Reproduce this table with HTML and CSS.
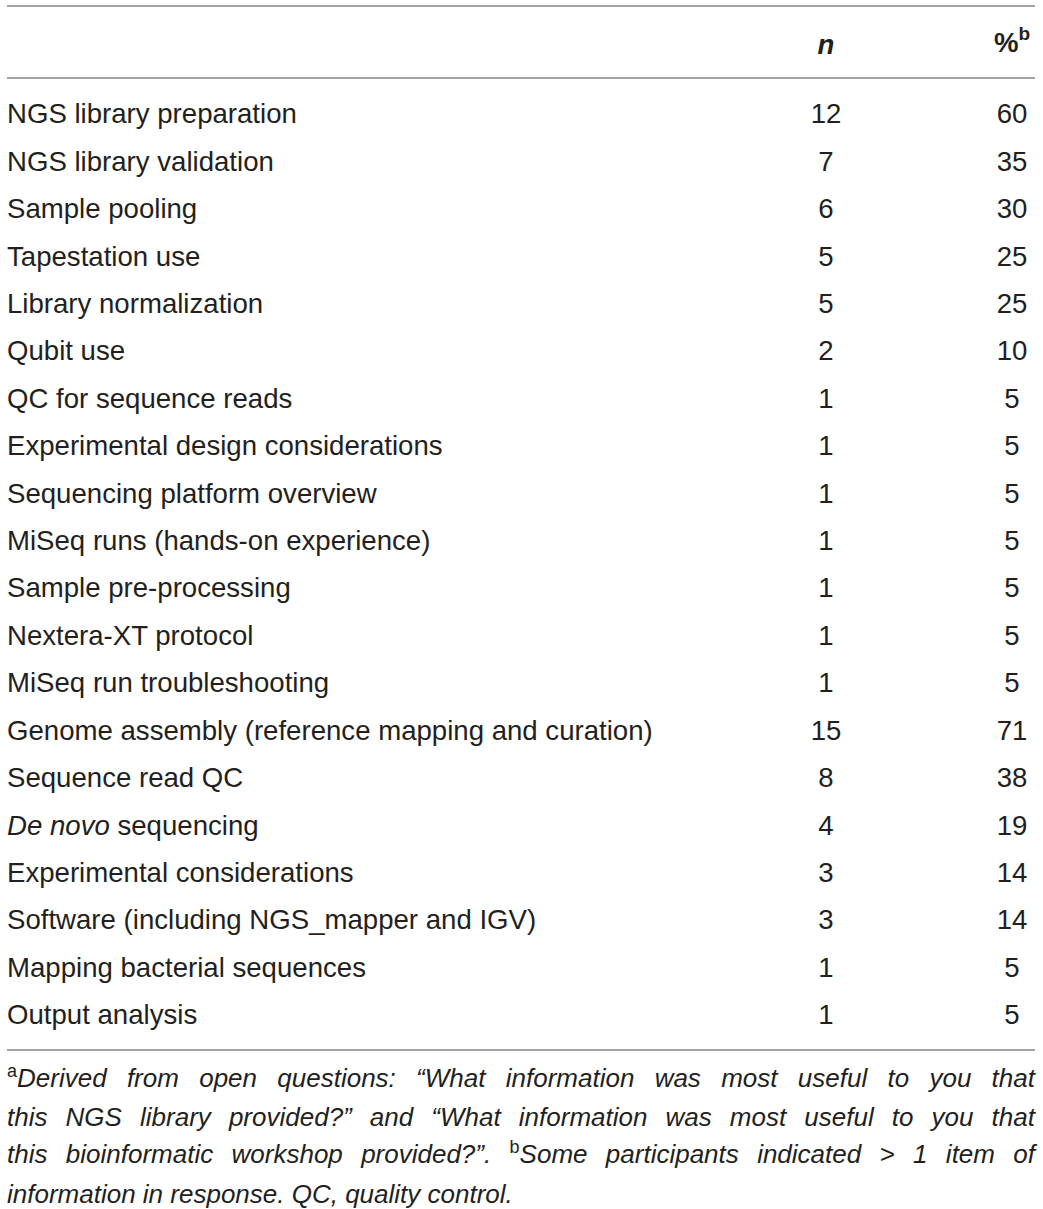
FILE: index.html
```html
<!DOCTYPE html>
<html lang="en">
<head>
<meta charset="utf-8">
<title>Table</title>
<link rel="stylesheet" href="styles.css">
</head>
<body>
<div class="page">
  <table class="data">
    <colgroup>
      <col class="c-label">
      <col class="c-n">
      <col class="c-pct">
    </colgroup>
    <thead>
      <tr>
        <th></th>
        <th class="num"><em>n</em></th>
        <th class="num">%<sup class="hsup">b</sup></th>
      </tr>
    </thead>
    <tbody>
      <tr><td>NGS library preparation</td><td class="num">12</td><td class="num">60</td></tr>
      <tr><td>NGS library validation</td><td class="num">7</td><td class="num">35</td></tr>
      <tr><td>Sample pooling</td><td class="num">6</td><td class="num">30</td></tr>
      <tr><td>Tapestation use</td><td class="num">5</td><td class="num">25</td></tr>
      <tr><td>Library normalization</td><td class="num">5</td><td class="num">25</td></tr>
      <tr><td>Qubit use</td><td class="num">2</td><td class="num">10</td></tr>
      <tr><td>QC for sequence reads</td><td class="num">1</td><td class="num">5</td></tr>
      <tr><td>Experimental design considerations</td><td class="num">1</td><td class="num">5</td></tr>
      <tr><td>Sequencing platform overview</td><td class="num">1</td><td class="num">5</td></tr>
      <tr><td>MiSeq runs (hands-on experience)</td><td class="num">1</td><td class="num">5</td></tr>
      <tr><td>Sample pre-processing</td><td class="num">1</td><td class="num">5</td></tr>
      <tr><td>Nextera-XT protocol</td><td class="num">1</td><td class="num">5</td></tr>
      <tr><td>MiSeq run troubleshooting</td><td class="num">1</td><td class="num">5</td></tr>
      <tr><td>Genome assembly (reference mapping and curation)</td><td class="num">15</td><td class="num">71</td></tr>
      <tr><td>Sequence read QC</td><td class="num">8</td><td class="num">38</td></tr>
      <tr><td><em>De novo</em> sequencing</td><td class="num">4</td><td class="num">19</td></tr>
      <tr><td>Experimental considerations</td><td class="num">3</td><td class="num">14</td></tr>
      <tr><td>Software (including NGS_mapper and IGV)</td><td class="num">3</td><td class="num">14</td></tr>
      <tr><td>Mapping bacterial sequences</td><td class="num">1</td><td class="num">5</td></tr>
      <tr><td>Output analysis</td><td class="num">1</td><td class="num">5</td></tr>
    </tbody>
  </table>
  <div class="notes">
    <span class="line"><sup class="fsup">a</sup>Derived from open questions: “What information was most useful to you that</span>
    <span class="line">this NGS library provided?” and “What information was most useful to you that</span>
    <span class="line">this bioinformatic workshop provided?”. <sup class="fsup">b</sup>Some participants indicated &gt; 1 item of</span>
    <span class="line last">information in response. QC, quality control.</span>
  </div>
</div>
</body>
</html>
```

FILE: styles.css
```css
html, body {
  margin: 0;
  padding: 0;
  background: #ffffff;
}

body {
  font-family: "Liberation Sans", Arial, Helvetica, sans-serif;
  color: #231f20;
}

.page {
  padding: 5px 8px 0 7px;
  width: 1028px;
}

.data {
  width: 1028px;
  border-collapse: collapse;
  table-layout: fixed;
  font-size: 27.6px;
}

.c-label { width: 656px; }
.c-n { width: 326px; }
.c-pct { width: 46px; }

.data th,
.data td {
  padding: 0;
  line-height: 47.4px;
  text-align: left;
  white-space: nowrap;
  font-weight: normal;
}

.data thead tr {
  border-top: 2px solid #a3a3a3;
  border-bottom: 2px solid #a3a3a3;
}

.data thead th {
  padding-top: 12px;
  padding-bottom: 8px;
  font-weight: bold;
}

.data .num {
  text-align: center;
  overflow: visible;
}

.data tbody tr:first-child td {
  padding-top: 11px;
}

.data tbody tr:last-child td {
  padding-bottom: 10px;
}

.data tbody {
  border-bottom: 2px solid #a3a3a3;
}

.hsup {
  font-size: 19px;
  vertical-align: 0;
  position: relative;
  top: -12px;
  font-weight: bold;
}

.notes {
  padding-top: 9px;
  font-size: 26px;
  font-style: italic;
  line-height: 36.7px;
}

.notes .line {
  display: block;
  text-align: justify;
  text-align-last: justify;
  white-space: nowrap;
}

.notes .line.last {
  text-align-last: left;
}

.fsup {
  font-style: normal;
  font-size: 18px;
  vertical-align: 0;
  position: relative;
  top: -10px;
}
```
